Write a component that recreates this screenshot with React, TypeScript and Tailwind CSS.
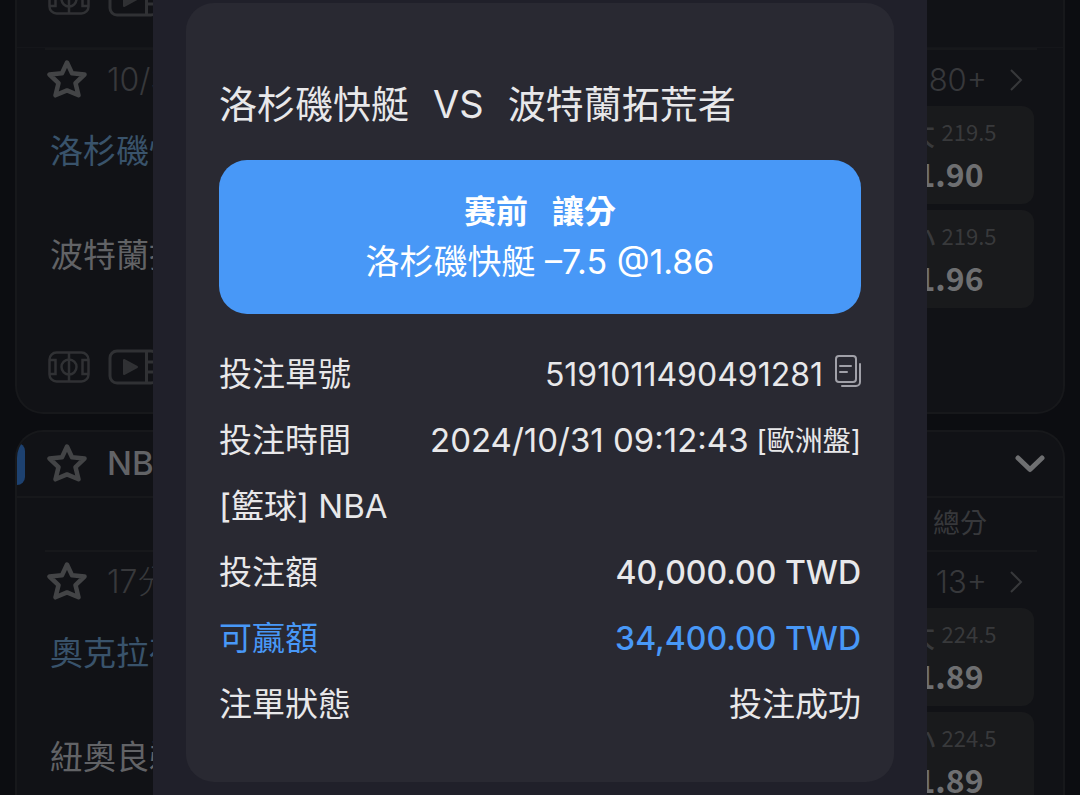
import React from "react";

type Odd = { side: string; line: string; price: string };

type Match = {
	time: string;
	more: string;
	home: string;
	away: string;
	odds: Odd[];
};

const clippers: Match = {
	time: "10/31",
	more: "80+",
	home: "洛杉磯快艇",
	away: "波特蘭拓荒者",
	odds: [
		{ side: "大", line: "219.5", price: "1.90" },
		{ side: "小", line: "219.5", price: "1.96" },
	],
};

const thunder: Match = {
	time: "17分鐘",
	more: "13+",
	home: "奧克拉荷馬",
	away: "紐奧良鵜鶘",
	odds: [
		{ side: "大", line: "224.5", price: "1.89" },
		{ side: "小", line: "224.5", price: "1.89" },
	],
};

const StarIcon = () => (
	<svg width="42" height="40" viewBox="0 2 42 40" fill="none" stroke="currentColor" strokeWidth="4.5" strokeLinejoin="round">
		<path d="M21 4.5l5 10.8 12.5 1.2-9 8.6 3 12.2L21 32.4 9.5 37.3l3-12.2-9-8.6 12.5-1.2z" />
	</svg>
);

const CourtIcon = () => (
	<svg width="42" height="32" viewBox="0 0 42 32" fill="none" stroke="currentColor" strokeWidth="2.5">
		<rect x="1.5" y="1.5" width="39" height="29" rx="7" />
		<path d="M21 1.5v29M1.5 9h6v14h-6M40.5 9h-6v14h6" />
		<circle cx="21" cy="16" r="7.5" />
	</svg>
);

const VideoIcon = () => (
	<svg width="52" height="36" viewBox="0 0 52 36" fill="none" stroke="currentColor" strokeWidth="3">
		<rect x="2" y="2" width="48" height="32" rx="7" />
		<path d="M38.5 2v32M38.5 13H50M38.5 23H50" />
		<path d="M16 11v14l13-7z" fill="currentColor" strokeWidth="2" strokeLinejoin="round" />
	</svg>
);

const ChevronRight = () => (
	<svg width="14" height="22" viewBox="0 0 14 22" fill="none" stroke="currentColor" strokeWidth="2">
		<path d="M2 1l10 10L2 21" />
	</svg>
);

const ChevronDown = () => (
	<svg width="30" height="18" viewBox="0 0 30 18" fill="none" stroke="currentColor" strokeWidth="5" strokeLinecap="round" strokeLinejoin="round">
		<path d="M3 3l12 11.5L27 3" />
	</svg>
);

const CopyIcon = () => (
	<svg width="26" height="32" viewBox="0 0 26 32" fill="none" stroke="currentColor" strokeWidth="2" strokeLinecap="round" strokeLinejoin="round">
		<rect x="1" y="1" width="20" height="26" rx="3" />
		<path d="M5 11h11M5 17h7M25 9v18a4 4 0 0 1-4 4H7" />
	</svg>
);

const MediaIcons = () => (
	<div className="flex items-center gap-[18px] text-[#303134]">
		<CourtIcon />
		<VideoIcon />
	</div>
);

const MatchBlock: React.FC<{ match: Match }> = ({ match }) => (
	<div className="ml-7 mr-[26px] border-t-2 border-[#17181b]">
		<div className="flex h-[56px] items-center pt-1 text-[32px] font-light text-[#37383b]">
			<button type="button" aria-label="收藏" className="ml-px text-[#434446]">
				<StarIcon />
			</button>
			<span className="ml-[19px]">{match.time}</span>
			<a href="#more" className="ml-auto mr-3.5 flex items-center gap-[22px] text-[31px]">
				{match.more}
				<ChevronRight />
			</a>
		</div>
		<div className="flex justify-between pr-[3px]">
			<div className="flex flex-col gap-1.5 pl-[5px] text-[33px] whitespace-nowrap">
				<span className="flex h-[98px] items-center pb-1.5 text-[#39536b]">{match.home}</span>
				<span className="flex h-[98px] items-center pb-1.5 text-[#626366]">{match.away}</span>
			</div>
			<div className="flex w-[162px] flex-col gap-1.5 font-['Noto_Sans_CJK_TC',sans-serif]">
				{match.odds.map((odd) => (
					<button
						key={odd.side}
						type="button"
						className="flex h-[98px] flex-col items-center justify-center rounded-xl bg-[#191a1c] pr-1.5 pb-1.5"
					>
						<span className="flex gap-1.5 text-[22px] leading-[42px] text-[#38393b]">
							<span className="text-[32px]">{odd.side}</span>
							{odd.line}
						</span>
						<span className="text-[32px] leading-[42px] font-bold text-[#6e6f71]">{odd.price}</span>
					</button>
				))}
			</div>
		</div>
	</div>
);

const Row: React.FC<{ label: string; accent?: boolean; children?: React.ReactNode }> = ({ label, accent, children }) => (
	<div className={`flex h-[66px] items-center justify-between ${accent ? "text-[#4898f7]" : ""}`}>
		<dt>{label}</dt>
		<dd className="flex items-center">{children}</dd>
	</div>
);

const BetSlip = () => (
	<div role="dialog" aria-label="投注詳情" className="absolute inset-y-0 inset-x-[153px] overflow-hidden bg-[#20202a] px-[33px] pt-[3px]">
		<div className="rounded-[28px] bg-[#292932] px-[33px] pt-[77px] pb-11 text-[33px] text-[#e8e8ea]">
			<h1 className="flex gap-6 text-[38px] leading-[48px] whitespace-nowrap">
				<span>洛杉磯快艇</span>
				<span>VS</span>
				<span>波特蘭拓荒者</span>
			</h1>
			<div className="mt-8 flex h-[154px] flex-col items-center justify-center rounded-[28px] bg-[#4898f7] leading-[50px] text-white">
				<p className="flex gap-6 text-[32px] font-bold">
					<span>赛前</span>
					<span>讓分</span>
				</p>
				<p className="text-[34px]">洛杉磯快艇 –7.5 @1.86</p>
			</div>
			<dl className="mt-7">
				<Row label="投注單號">
					<span className="text-[32px]">5191011490491281</span>
					<button type="button" aria-label="複製" className="ml-3 pb-2 text-[#a0a0a8]">
						<CopyIcon />
					</button>
				</Row>
				<Row label="投注時間">
					2024/10/31 09:12:43
					<span className="ml-2 text-[28px]">[歐洲盤]</span>
				</Row>
				<Row label="[籃球] NBA" />
				<Row label="投注額">
					<span className="text-[32px] font-medium">40,000.00 TWD</span>
				</Row>
				<Row label="可贏額" accent>
					<span className="text-[32px] font-medium">34,400.00 TWD</span>
				</Row>
				<Row label="注單狀態">投注成功</Row>
			</dl>
		</div>
	</div>
);

export default function App() {
	return (
		<main className="relative h-screen overflow-hidden bg-[#0c0d11] px-[15px] font-['Inter','Noto_Sans_CJK_TC',sans-serif]">
			<section className="rounded-b-[28px] border-x-2 border-b-2 border-[#17181b] bg-[#111216]">
				<div className="flex h-12 items-end overflow-hidden border-b border-[#15161a] pb-[30px] pl-[31px]">
					<MediaIcons />
				</div>
				<MatchBlock match={clippers} />
				<div className="flex h-[104px] items-center pt-3.5 pl-[31px]">
					<MediaIcons />
				</div>
			</section>

			<section className="mt-4 overflow-hidden rounded-t-[28px] border-x-2 border-t-2 border-[#17181b] bg-[#111216]">
				<header className="flex h-[66px] items-center border-b-2 border-[#17181b]">
					<span className="h-[42px] w-2 rounded-r-lg bg-[#1d4170]" />
					<button type="button" aria-label="收藏" className="ml-[21px] text-[#434446]">
						<StarIcon />
					</button>
					<h2 className="ml-[19px] text-[33px] font-medium text-[#626366]">NBA</h2>
					<button type="button" aria-label="收合" className="ml-auto mr-[18px] text-[#6e6f71]">
						<ChevronDown />
					</button>
				</header>
				<div className="flex h-[52px] items-center justify-end pr-[76px] text-[27px] text-[#37383b]">總分</div>
				<MatchBlock match={thunder} />
			</section>

			<BetSlip />
		</main>
	);
}
